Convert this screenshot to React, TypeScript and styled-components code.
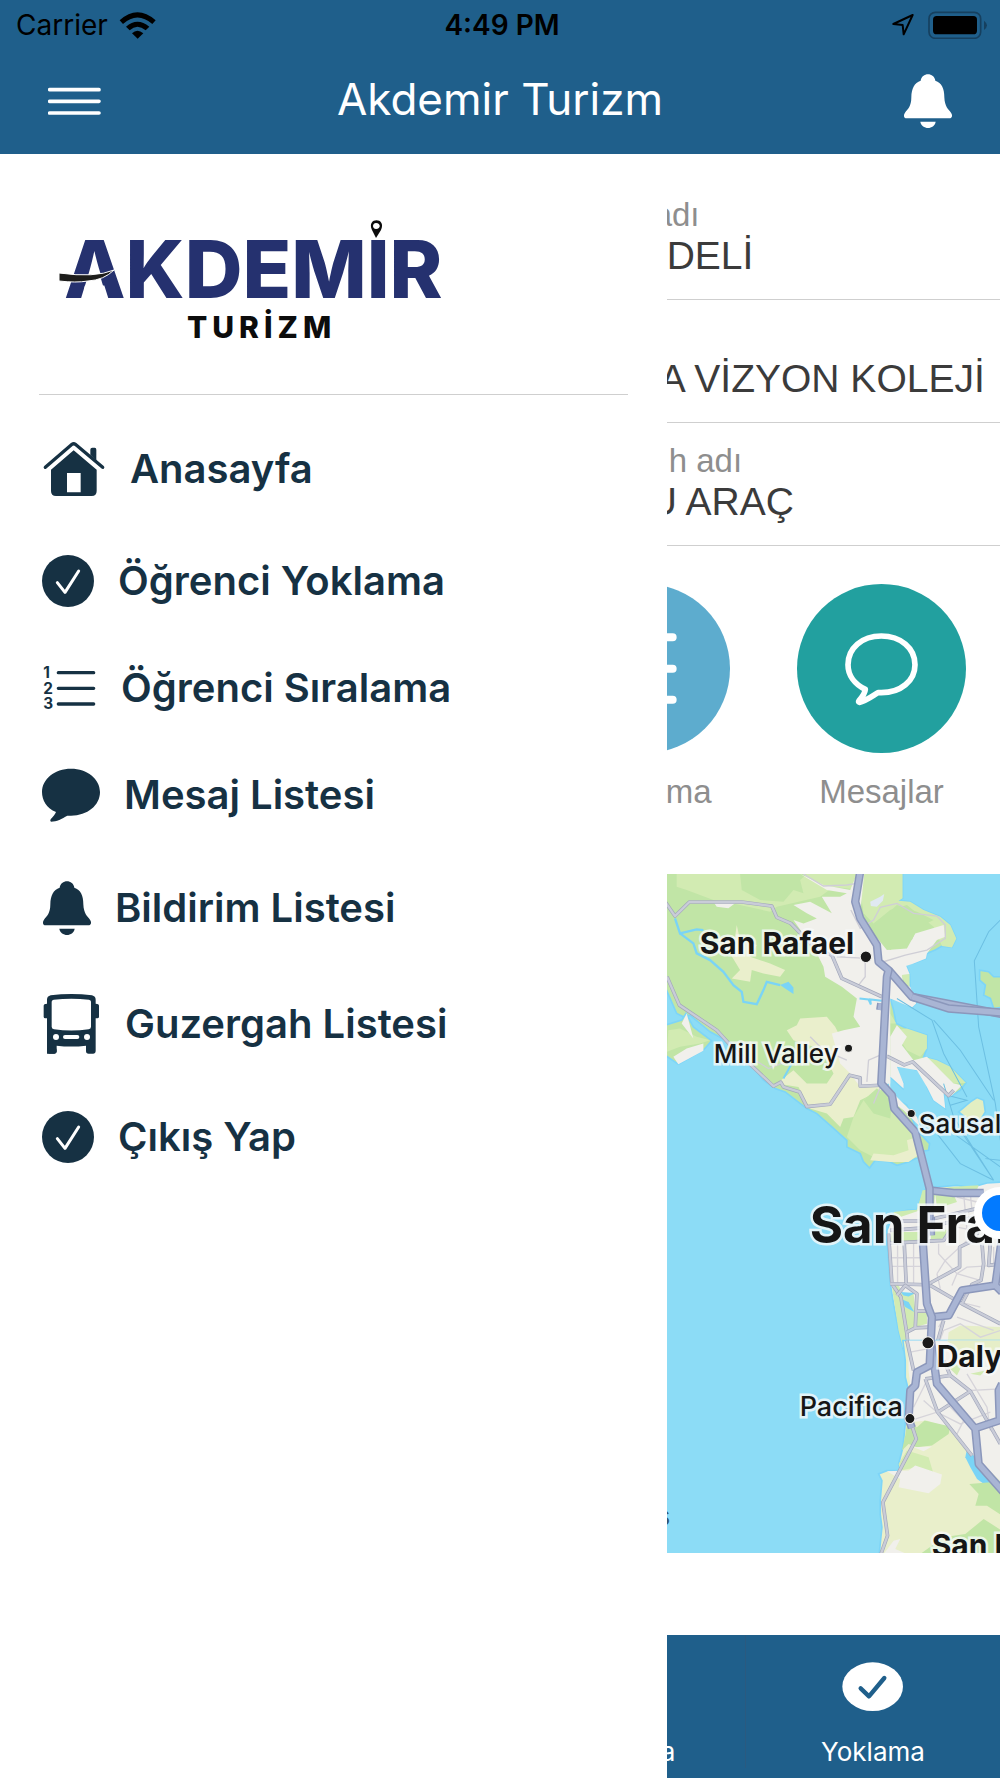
import React from "react";
import styled, { createGlobalStyle } from "styled-components";

const colors = {
  brand: "#1f5f8b",
  ink: "#163143",
  line: "#cfcfcf",
  label: "#8e8e8e",
  value: "#3b3b3b",
  sky: "#5dacce",
  teal: "#22a09f",
};

const uiFont = `Inter, Roboto, "Liberation Sans", sans-serif`;
const textFont = `"Liberation Sans", Arial, sans-serif`;

const GlobalStyle = createGlobalStyle`
  *, *::before, *::after { box-sizing: border-box; }
  body { margin: 0; background: #fff; font-family: ${uiFont}; }
  button { border: 0; padding: 0; background: none; font: inherit; color: inherit; cursor: pointer; }
  a { color: inherit; text-decoration: none; }
  svg { display: block; flex: none; }
`;

const Screen = styled.div`
  display: flex;
  flex-direction: column;
  min-height: 100vh;
  overflow: hidden;
`;

const Header = styled.header`
  background: ${colors.brand};
  padding-bottom: 22px;
`;

const StatusBar = styled.div`
  display: grid;
  grid-template-columns: 1fr auto 1fr;
  align-items: center;
  height: 50px;
  padding: 0 12px 0 16px;
  font-size: 28px;
  color: #000;
`;

const StatusGroup = styled.div<{ $end?: boolean }>`
  display: flex;
  align-items: center;
  justify-content: ${(p) => (p.$end ? "flex-end" : "flex-start")};
  gap: ${(p) => (p.$end ? 13 : 11)}px;
`;

const Clock = styled.time`
  font-weight: 600;
`;

const NavBar = styled.div`
  display: grid;
  grid-template-columns: 1fr auto 1fr;
  align-items: center;
  height: 82px;
  padding: 20px 48px 0;
  color: #fff;
`;

const Title = styled.h1`
  margin: 0;
  padding-bottom: 4px;
  font-size: 44px;
  font-weight: 400;
  line-height: 56px;
`;

const IconButton = styled.button<{ $end?: boolean }>`
  justify-self: ${(p) => (p.$end ? "end" : "start")};
  color: #fff;
`;

const Body = styled.div`
  flex: 1;
  display: grid;
  grid-template-columns: minmax(0, 2fr) minmax(0, 1fr);
`;

const Drawer = styled.aside`
  background: #fff;
  color: ${colors.ink};
`;

const Brand = styled.div`
  margin: 0 39px;
  padding: 62px 0 52px 19px;
  border-bottom: 1px solid ${colors.line};
`;

const Menu = styled.nav`
  display: flex;
  flex-direction: column;
  align-items: flex-start;
  gap: 54px;
  padding: 44px 42px;
`;

const MenuLink = styled.a`
  display: flex;
  align-items: center;
  gap: 24px;
  font-size: 40px;
  font-weight: 600;
  line-height: 48px;
  white-space: nowrap;
`;

const Content = styled.main`
  display: flex;
  flex-direction: column;
  overflow: hidden;
  padding-top: 23px;
  font-family: ${textFont};
`;

const Info = styled.section`
  height: 123px;
  padding-top: 17px;
  border-bottom: 1px solid ${colors.line};
  white-space: nowrap;
`;

const InfoLabel = styled.div<{ $hidden: number }>`
  height: 42px;
  margin-left: ${(p) => -p.$hidden}px;
  font-size: 33px;
  line-height: 42px;
  color: ${colors.label};
`;

const InfoValue = styled.div<{ $hidden: number }>`
  margin-left: ${(p) => -p.$hidden}px;
  font-size: 39px;
  line-height: 40px;
  color: ${colors.value};
`;

const Shortcuts = styled.div`
  display: flex;
  justify-content: flex-end;
  gap: 67px;
  padding: 38px 34px 61px 0;
`;

const Shortcut = styled.button`
  flex: none;
  display: flex;
  flex-direction: column;
  align-items: center;
  gap: 18px;
  width: 169px;
  font-size: 33px;
  line-height: 42px;
  color: ${colors.label};
`;

const Disc = styled.span<{ $color: string }>`
  display: grid;
  place-items: center;
  width: 169px;
  height: 169px;
  border-radius: 50%;
  background: ${(p) => p.$color};
  color: #fff;
`;

const MapBox = styled.section`
  position: relative;
  height: 679px;
  overflow: hidden;
  background: #8cdcf6;
  font-family: ${uiFont};
`;

const MapArt = styled.svg`
  width: 100%;
  height: 100%;
`;

const Place = styled.span<{ $x: number; $y: number; $size: number; $weight?: number; $color?: string }>`
  position: absolute;
  left: ${(p) => p.$x}px;
  top: ${(p) => p.$y}px;
  font-size: ${(p) => p.$size}px;
  font-weight: ${(p) => p.$weight ?? 500};
  line-height: 1;
  white-space: nowrap;
  color: ${(p) => p.$color ?? "#161616"};
  -webkit-text-stroke: ${(p) => (p.$color ? "0" : "5px rgba(248, 250, 250, 0.8)")};
  paint-order: stroke fill;
`;

const Here = styled.span`
  position: absolute;
  left: 307px;
  top: 313px;
  width: 52px;
  height: 52px;
  border: 8px solid #fff;
  border-radius: 50%;
  background: #027aff;
`;

const TabBar = styled.nav`
  display: flex;
  justify-content: flex-end;
  height: 143px;
  margin-top: auto;
  background: ${colors.brand};
  color: #fff;
  font-family: ${uiFont};
`;

const Tab = styled.a`
  flex: none;
  display: flex;
  flex-direction: column;
  align-items: center;
  justify-content: space-between;
  width: 255px;
  height: 133px;
  padding-top: 27px;
  border-left: 1px solid #2a5a80;
  font-size: 26px;
  line-height: 32px;
`;

type ArtProps = { box: [number, number, number, number]; scale?: number; children: React.ReactNode };

/* Artwork is drawn on a grid three times finer than the pixel grid. */
const Art = ({ box, scale = 3, children }: ArtProps) => (
  <svg viewBox={box.join(" ")} width={box[2] / scale} height={box[3] / scale} fill="currentColor" aria-hidden="true">
    {children}
  </svg>
);

const WifiIcon = () => (
  <Art box={[360, 28, 111, 87]}>
    <path d="M362 56Q415 8 470 56L460 67Q415 28 372 67Z" />
    <path d="M381 75Q415 45 451 75L440 86Q415 65 392 86Z" />
    <path d="M399 95Q415 80 433 95L416 111Z" />
  </Art>
);

const LocationIcon = () => (
  <Art box={[1174, 40, 72, 70]}>
    <path d="M1239 46L1181 73L1209 76L1212 104Z" fill="none" stroke="currentColor" strokeWidth="6" strokeLinejoin="round" />
  </Art>
);

const BatteryIcon = () => (
  <Art box={[1284, 30, 180, 86]}>
    <rect x="1287" y="34" width="155" height="78" rx="19" fill="none" stroke="#16405f" strokeWidth="5" />
    <rect x="1299" y="45" width="132" height="55" rx="11" />
    <path d="M1452 59Q1461 66 1461 73Q1461 80 1452 87Z" fill="#16405f" />
  </Art>
);

const MenuIcon = () => (
  <Art box={[144, 260, 159, 90]}>
    <path d="M149 271H297M149 306H297M149 341H297" stroke="currentColor" strokeWidth="11" strokeLinecap="round" />
  </Art>
);

const BellIcon = () => (
  <Art box={[126, 438, 147, 186]}>
    <path d="M179 470C182 444 220 444 223 470C242 477 250 492 250 520C251 548 262 556 270 566C276 575 273 583 265 583H137C129 583 126 575 132 566C140 556 151 548 151 520C152 492 160 477 179 470Z" />
    <path d="M178 593H224C220 618 182 618 178 593Z" />
  </Art>
);

const HouseIcon = () => (
  <Art box={[126, 85, 192, 180]}>
    <path d="M136 170L216 101Q221 97 226 101L308 170" fill="none" stroke="currentColor" strokeWidth="10" strokeLinecap="round" />
    <path d="M271 132V117Q271 111 277 111H284Q289 111 289 117V150Z" />
    <path fillRule="evenodd" d="M221 119L290 177V241Q290 256 275 256H168Q153 256 153 241V177ZM201 187V245H242V187Z" />
  </Art>
);

const CheckIcon = () => (
  <Art box={[126, 427, 156, 168]}>
    <circle cx="204" cy="511" r="78" />
    <path d="M172 516L195 545L236 481" fill="none" stroke="#fff" strokeWidth="9" strokeLinecap="round" strokeLinejoin="round" />
  </Art>
);

const NumberedIcon = () => (
  <Art box={[126, 756, 165, 150]}>
    <g fontFamily="Inter, sans-serif" fontSize="46" fontWeight="700">
      <text x="130" y="801">1</text>
      <text x="130" y="848">2</text>
      <text x="130" y="895">3</text>
    </g>
    <path d="M175 785H281M175 832H281M175 879H281" stroke="currentColor" strokeWidth="10" strokeLinecap="round" />
  </Art>
);

const BubbleIcon = () => (
  <Art box={[126, 109, 174, 168]}>
    <path d="M213 114C262 114 300 145 300 184C300 224 262 255 213 255H202C186 264 170 273 153 273Q149 271 152 266C160 257 165 251 168 244C140 233 126 209 126 184C126 145 164 114 213 114Z" />
  </Art>
);

const BusIcon = () => (
  <Art box={[126, 786, 177, 186]}>
    <path
      fillRule="evenodd"
      d="M141 968V862H136Q131 862 131 857V824Q131 818 141 818V806Q141 796 152 793Q214 785 276 793Q287 796 287 806V818Q297 818 297 824V857Q297 862 292 862H287V961Q287 968 280 968H266Q258 968 258 960V944Q214 949 170 944V960Q170 968 162 968ZM155 812V887Q155 893 162 895Q214 902 266 895Q273 893 273 887V812Q273 807 267 806Q214 801 161 806Q155 807 155 812Z"
    />
    <rect x="141" y="950" width="29" height="18" rx="7" />
    <g fill="#fff">
      <circle cx="168" cy="918" r="9" />
      <circle cx="261" cy="918" r="9" />
      <rect x="189" y="912" width="49" height="12" rx="6" />
    </g>
  </Art>
);

const ListIcon = () => (
  <Art box={[-62, 215, 190, 224]}>
    <path d="M-10 234H114M-10 328H114M-10 421H114" stroke="currentColor" strokeWidth="24" strokeLinecap="round" />
    <path d="M-50 234H-49M-50 328H-49M-50 421H-49" stroke="currentColor" strokeWidth="24" strokeLinecap="round" />
  </Art>
);

const OutlineBubbleIcon = () => (
  <Art box={[609, 213, 230, 228]}>
    <path
      d="M724 228C782 228 825 264 825 314C825 363 782 398 724 398H714C696 409 677 424 658 427Q654 426 657 422C667 411 675 400 676 388C643 372 624 345 624 314C624 264 666 228 724 228Z"
      fill="none"
      stroke="currentColor"
      strokeWidth="17"
      strokeLinejoin="round"
    />
  </Art>
);

const TabCheckIcon = () => (
  <Art box={[605, 184, 185, 148]}>
    <ellipse cx="697" cy="258" rx="91" ry="73" />
    <path d="M661 263L686 287L732 232" fill="none" stroke={colors.brand} strokeWidth="13" strokeLinecap="round" strokeLinejoin="round" />
  </Art>
);

const TabHomeIcon = () => (
  <Art box={[0, 0, 180, 148]}>
    <path d="M90 8L170 70H150V140H30V70H10Z" />
  </Art>
);

const Logo = () => (
  <svg viewBox="58 216 390 126" width="390" height="126" role="img" aria-label="Akdemir Turizm">
    <g fontFamily="Inter, sans-serif" fontWeight="800">
      <text x="64" y="298" fontSize="80" fill="#25316f">
        AKDEMIR
      </text>
      <text x="187" y="338" fontSize="30" letterSpacing="5" fill="#0c0c0c">
        TURİZM
      </text>
    </g>
    <path d="M87 279H101L104 289H84Z" fill="#fff" />
    <path d="M59 273Q95 278 114 270Q104 280 88 281Q76 283 59 281Z" fill="#1d1d1b" stroke="#fff" strokeWidth="1" />
    <path
      fillRule="evenodd"
      d="M376 238L372 230C366 217 387 217 381 230ZM376 223C372 223 372 229 376 229C381 229 381 223 376 223Z"
      fill="#0c0c0c"
    />
  </svg>
);

const Road = ({ d, major }: { d: string; major?: boolean }) => (
  <g fill="none" strokeLinejoin="round">
    <path d={d} stroke={major ? "#8b97bb" : "#a3a8bb"} strokeWidth={major ? 25 : 11} />
    <path d={d} stroke={major ? "#a9b5d4" : "#c9ccd8"} strokeWidth={major ? 16 : 7} />
  </g>
);

const BayMap = () => (
  <MapArt viewBox="21 12 999 2037" preserveAspectRatio="xMinYMin slice" aria-hidden="true">
    <g stroke="#7dd5f8" strokeWidth="5" fill="#c1e5a6">
      <path d="M15 5H727V85L715 92L750 95L790 120L840 140L870 165L888 205L875 232L845 228L825 240L800 250L797 265L760 280L745 275L700 300L735 280L748 312L750 370L768 400L755 412L735 395L690 385L700 420L708 460L740 475L800 495V535L790 560L830 570L870 590L917 638L900 660L870 680L850 670L855 715L820 690L800 650L810 630L770 600L740 590H710L705 600L730 640L728 655L700 630L680 610L670 640L700 680L740 705L770 780L808 820L805 840L790 842L775 860L745 875L710 885L690 875L645 870L628 893L610 875L600 850L560 830V810L510 765L470 730L440 715L375 665L345 655L310 630L270 580L215 520L150 485L90 435L70 440L50 430L15 350Z" />
      <path d="M15 465L65 450L78 430L100 470L155 512L130 540L55 582L15 555Z" />
      <path d="M958 300L985 305L1000 320H1025V412L1000 415L990 385L970 375L975 345L958 330Z" />
      <path d="M895 725L930 695L950 682L970 690L975 725L960 750L920 745Z" fill="#e2eec2" />
    </g>
    <g fill="#d2ebb2">
      <path d="M50 12H240L245 60L300 90L370 95L400 60L430 70L420 30L440 12H727V85L715 92L750 95L790 120L840 140L870 165L888 205L875 232L845 228L820 170L740 105L690 120L640 160L610 130L600 60L520 50L480 80L350 110L330 125L240 105L160 90L80 60L50 50Z" />
      <path d="M25 480L60 475L110 500L150 510L120 520L60 530L21 545Z" />
      <path d="M700 480L740 475L800 495V535L780 560L740 540ZM790 560L830 570L870 590L917 638L880 640L840 600Z" />
      <path d="M690 430L708 460H690ZM725 315L748 312V350L735 345Z" />
    </g>
    <g fill="#eaefcc">
      <path d="M175 205L225 200L230 165L240 210L290 225L270 260L330 280L375 300L360 320L310 310L275 300L270 335L215 325L240 300L210 250Z" />
      <path d="M380 480L410 465L420 445L500 440L525 470L540 500L570 560L580 610L690 650L660 660L600 690L580 740L550 745L540 770L500 730L450 715L415 650L350 640L400 600L440 640L500 640L520 610L500 570L460 530L400 510Z" />
    </g>
    <g fill="#f1f0ec">
      <path d="M420 12L490 45L570 60L590 12H612L600 130L640 190L680 240L740 235L765 190L850 165L855 200L830 210L800 250L797 265L760 280L700 300L735 280L748 312L725 315L730 345L750 350L768 400L755 412L690 385L690 640L600 650L570 610L540 580L515 490L550 480L600 470L580 440L590 385L545 350L495 320L490 290L470 250L400 150L430 160L470 145L440 130L400 105L450 95L515 130L485 80L540 80L560 70L500 60Z" />
      <path d="M160 95L230 96L205 115L170 110ZM65 460L80 430L100 505ZM40 560L80 535L130 520V542L55 582Z" />
      <path d="M690 500L710 465L740 500L725 525L760 570L800 560L880 640L905 645L870 680L850 670L855 715L820 690L800 650L770 600L710 590L730 640V655L680 610L690 660L770 740L780 770L730 720L690 690Z" />
    </g>
    <path d="M645 165L710 105L770 125L820 150L770 175L755 210H730L690 240L640 190Z" fill="#c1e5a6" />
    <path d="M610 690L650 655L695 690L710 740L780 800V860L690 870L640 860L600 840L560 800L580 740Z" fill="#d2ebb2" />
    <path d="M610 690L650 655L695 690L690 745L640 730Z" fill="#c1e5a6" />
    <path d="M740 810L770 800L790 842L745 875L690 875L630 870L640 850L700 855L745 840Z" fill="#eaefcc" />
    <path d="M630 95L660 80L672 72L668 92L650 110L632 108Z" fill="#e0e9f2" />
    <g fill="none" stroke="#7ad4f6">
      <path d="M45 145L60 190L110 178L130 180M60 190L100 220L110 250L150 270L190 305L220 345L245 365L250 395L290 402L310 360L320 335L360 345" strokeWidth="7" />
      <path d="M598 385L625 388L632 403L630 388L665 392M395 580L370 625" strokeWidth="6" />
    </g>
    <path d="M360 345L385 335L400 352V372L375 355Z" fill="#7ad4f6" />
    <g fill="none" stroke="#6cbfe2" strokeWidth="3">
      <path d="M1020 150L985 185L942 272L955 470L1005 700L1020 810M710 385L815 450L850 550L920 680M820 450L900 540L1000 690" />
      <path d="M850 640L880 740L1000 930M860 675L920 690L870 705M830 790L900 880L1000 930M880 790L1020 890M900 780L1000 930M975 865L1020 870" />
    </g>
    <g fill="none" stroke="#cfced6" strokeWidth="4">
      <path d="M430 12L490 48L560 45L590 40M572 120L600 175L640 150L660 112L710 100L760 130L830 138L855 165V205L800 240L735 255L670 275M615 265V320L595 345M450 500L490 540L560 570M620 635L625 570L660 555M285 570L325 595L390 570M665 640L640 700M530 260L620 265" />
    </g>
    <Road d="M15 95L45 138L88 96H245L335 108L350 142L392 160L470 240L515 255L545 325L665 380" />
    <Road d="M21 320L58 405L170 480L225 540L340 648L362 636L370 650L418 665L440 709L510 702L568 615L600 623V648L660 645" />
    <Road d="M680 558L732 584L757 575L865 676L880 660" />
    <Road major d="M663 400L660 420" />

    <g transform="translate(0 780)">
      <path d="M787 190L800 172L830 170L890 165L930 172L980 158L1030 155V660H730L715 600L700 520L690 460L682 350L680 300L700 250L740 240L770 238Z" fill="#f1f0ec" stroke="#7dd5f8" strokeWidth="5" />
      <path d="M730 660L715 600L698 490L695 465L715 462L725 490L760 490L765 540L800 545V580L765 590L740 600L742 660Z" fill="#d2ebb2" />
      <path d="M787 180L870 170L955 165L950 178L875 182L890 215L860 225L830 235L825 190L820 240L780 240L705 265L700 245L745 240L770 238ZM695 305H780V335L690 332ZM812 302L870 297L858 320L812 335Z" fill="#cdebb0" />
      <path d="M865 605L900 585L1020 590V660H860Z" fill="#e6eec8" />
      <path d="M720 485L765 488L745 498L730 495ZM720 505L745 515L762 545L735 530Z" fill="#7ad4f6" />
      <g fill="none" stroke="#d6d4da" strokeWidth="4">
        <path d="M695 382H780M695 408H780M712 340V460M760 340V460M835 340V370L890 430L960 450M830 430L855 390L920 330M840 475L830 430M875 465L890 430L920 410L1010 405M835 640L850 600L900 580L960 620L1020 600M890 560L1000 600M835 590L880 510L960 530M890 200L950 215M880 270L950 280M890 290L940 300M910 190L920 300M930 190L935 240M985 340V400M1000 350V400" />
      </g>
      <Road d="M685 310L695 460L722 500L740 610L745 660" />
      <Road d="M690 300L800 292L870 275L1000 250" />
      <Road d="M732 340L738 462M690 460L800 463L898 410V350L940 330L960 290M690 338L850 330L870 300M715 272H790L990 225" />
      <Road d="M710 495L735 465L770 490L765 592L740 605M765 542H810M765 592L810 590" />
      <Road d="M810 465L905 520L1020 580M965 340L970 400L962 450L935 462L905 520M830 640L850 570M990 340L985 405L1020 400" />
      <Road major d="M815 560L865 555L905 480L1005 465L1025 320M1005 465L1025 485" />
      <Road major d="M808 180L880 188H970M812 260V315" />
    </g>

    <g transform="translate(0 1410)">
      <path d="M1030 0H728L735 60V110L745 150L735 250L728 320L715 370L720 390H680L655 400L665 420L660 480V520L665 560L655 660H1030Z" fill="#e9efcb" stroke="#7dd5f8" strokeWidth="5" />
      <path d="M745 0H1030V430L945 350L920 325L880 270L830 250L800 240L750 245L752 150L745 90Z" fill="#f1f0ec" />
      <path d="M860 0H1030V60L975 50L900 80L890 30Z" fill="#e6eec8" />
      <path d="M850 65L905 75L890 105ZM930 100L975 90L960 105Z" fill="#d2ebb2" />
      <path d="M740 252L770 260L793 240L870 258L865 280L815 315L770 320L745 310L725 330L735 285Z" fill="#c1e5a6" />
      <path d="M740 330L805 350L820 400L770 380L720 390L715 370Z" fill="#d2ebb2" />
      <path d="M680 392L745 390L765 375L845 402L840 430L805 458L715 440L720 415ZM760 320L815 318L790 332ZM700 600L720 595L705 625L740 640H670Z" fill="#f1f0ec" />
      <path d="M920 325L945 350L1025 430V460L985 440L950 415L930 380L915 350Z" fill="#7ad4f6" />
      <path d="M927 430L990 425L1025 465V525L980 495H945L955 460ZM915 580L970 535L1025 570V640H780L850 590Z" fill="#c1e5a6" />
      <g fill="none" stroke="#d6d4da" strokeWidth="4">
        <path d="M750 35L800 25M750 240L830 215L900 250L990 215M890 280L910 240L860 190M760 200L800 120M930 150L1020 145M920 100L980 200L990 270M830 215L790 180" />
      </g>
      <Road d="M740 0L760 90M795 115L870 105L930 152L1020 310M795 115L832 215L935 345M832 215L930 152M870 105L850 60" />
      <Road d="M755 255L768 295L668 485L682 585L655 660" />
      <Road major d="M812 0L830 130L945 265L955 370L1030 455M940 265L1030 235M1025 130L1015 150L1018 240" />
    </g>

    <Road major d="M685 300L755 380L850 398L1030 433" />
    <Road major d="M755 380L865 415L1030 428" />
    <Road major d="M600 5L585 95L600 145L650 225L655 275L685 300L680 320L663 640L695 675L702 715L765 785L808 955V1040L788 1120L800 1300L815 1340L808 1485L770 1505L765 1545L750 1560L745 1645L755 1672" />

    <g fill="#1a1a1a" stroke="#f6f6f4" strokeWidth="3">
      <circle cx="617" cy="260" r="17" />
      <circle cx="565" cy="534" r="12" />
      <circle cx="753" cy="730" r="12" />
      <circle cx="803" cy="1417" r="18" />
      <circle cx="749" cy="1644" r="15" />
    </g>
  </MapArt>
);

const infoRows = [
  { label: "adı", labelHidden: 13, value: "DELİ", valueHidden: 0 },
  { label: "", labelHidden: 0, value: "A VİZYON KOLEJİ", valueHidden: 7 },
  { label: "h adı", labelHidden: -2, value: "U ARAÇ", valueHidden: 18 },
];

const menuItems = [
  { label: "Anasayfa", icon: <HouseIcon /> },
  { label: "Öğrenci Yoklama", icon: <CheckIcon /> },
  { label: "Öğrenci Sıralama", icon: <NumberedIcon /> },
  { label: "Mesaj Listesi", icon: <BubbleIcon /> },
  { label: "Bildirim Listesi", icon: <BellIcon /> },
  { label: "Guzergah Listesi", icon: <BusIcon /> },
  { label: "Çıkış Yap", icon: <CheckIcon /> },
];

const places = [
  { name: "San Rafael", x: 33, y: 54, size: 30, weight: 700 },
  { name: "Mill Valley", x: 47, y: 167, size: 26 },
  { name: "Sausalito", x: 252, y: 237, size: 26 },
  { name: "San Francisco", x: 143, y: 325, size: 51, weight: 700 },
  { name: "Daly City", x: 270, y: 467, size: 30, weight: 700 },
  { name: "Pacifica", x: 133, y: 519, size: 27 },
  { name: "San Bruno", x: 265, y: 656, size: 30, weight: 700 },
  { name: "s", x: -12, y: 628, size: 28, weight: 600, color: "#33566a" },
];

export default function App() {
  return (
    <Screen>
      <GlobalStyle />
      <Header>
        <StatusBar>
          <StatusGroup>
            <span>Carrier</span>
            <WifiIcon />
          </StatusGroup>
          <Clock>4:49 PM</Clock>
          <StatusGroup $end>
            <LocationIcon />
            <BatteryIcon />
          </StatusGroup>
        </StatusBar>
        <NavBar>
          <IconButton aria-label="Menü">
            <MenuIcon />
          </IconButton>
          <Title>Akdemir Turizm</Title>
          <IconButton $end aria-label="Bildirimler">
            <BellIcon />
          </IconButton>
        </NavBar>
      </Header>

      <Body>
        <Drawer>
          <Brand>
            <Logo />
          </Brand>
          <Menu>
            {menuItems.map((item) => (
              <MenuLink href="#" key={item.label}>
                {item.icon}
                {item.label}
              </MenuLink>
            ))}
          </Menu>
        </Drawer>

        <Content>
          {infoRows.map((row) => (
            <Info key={row.value}>
              <InfoLabel $hidden={row.labelHidden}>{row.label}</InfoLabel>
              <InfoValue $hidden={row.valueHidden}>{row.value}</InfoValue>
            </Info>
          ))}
          <Shortcuts>
            <Shortcut>
              <Disc $color={colors.sky}>
                <ListIcon />
              </Disc>
              Sıralama
            </Shortcut>
            <Shortcut>
              <Disc $color={colors.teal}>
                <OutlineBubbleIcon />
              </Disc>
              Mesajlar
            </Shortcut>
          </Shortcuts>
          <MapBox aria-label="Harita">
            <BayMap />
            {places.map((p) => (
              <Place key={p.name} $x={p.x} $y={p.y} $size={p.size} $weight={p.weight} $color={p.color}>
                {p.name}
              </Place>
            ))}
            <Here />
          </MapBox>
          <TabBar>
            <Tab href="#">
              <TabHomeIcon />
              Anasayfa
            </Tab>
            <Tab href="#">
              <TabCheckIcon />
              Yoklama
            </Tab>
          </TabBar>
        </Content>
      </Body>
    </Screen>
  );
}
